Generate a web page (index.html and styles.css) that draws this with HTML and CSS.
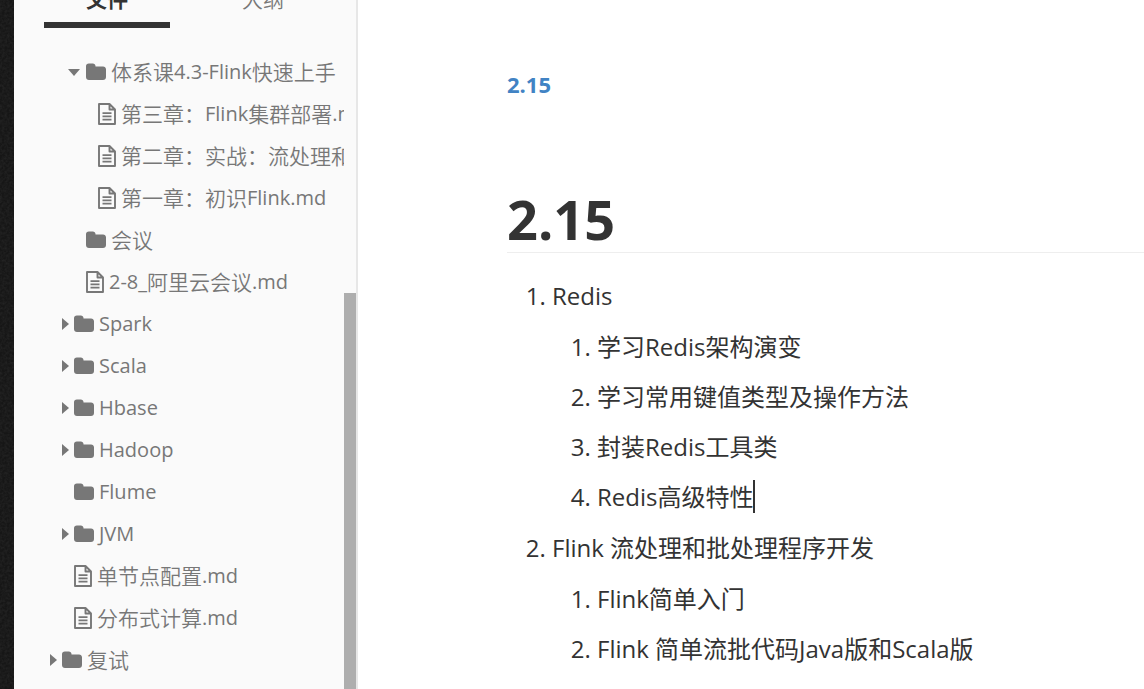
FILE: index.html
```
<!DOCTYPE html>
<html lang="zh-CN">
<head>
<meta charset="utf-8">
<title>2.15</title>
<link rel="stylesheet" href="styles.css">
</head>
<body>
<svg class="defs" aria-hidden="true">
  <symbol id="folder" viewBox="0 0 20 18"><path d="M0 3.2C0 1.6 1.2.5 2.8.5h4C8.3.5 9.500 1.600 9.500 3.100v.4H17c1.700 0 3 1.200 3 2.800V14c0 1.700-1.200 3-3 3H3c-1.700 0-3-1.200-3-3z"/></symbol>
  <symbol id="file" viewBox="0 0 18 22"><path fill="none" stroke="currentColor" stroke-width="1.900" stroke-linejoin="round" d="M1 1h10.500L17 6.500V21H1zM11.500 1v5.500H17"/><path d="M4.500 9.300h9V11h-9zM4.500 12.500h9v1.700h-9zM4.500 15.700h9v1.700h-9z"/></symbol>
  <symbol id="right" viewBox="0 0 7 12"><path d="M0 0l7 6-7 6z"/></symbol>
  <symbol id="down" viewBox="0 0 12 7"><path d="M0 0h12L6 7z"/></symbol>
</svg>
<div class="app">
  <svg class="edge" aria-hidden="true">
    <filter id="grain"><feTurbulence type="fractalNoise" baseFrequency="0.4" numOctaves="2"/><feColorMatrix values="0 0 0 0 1  0 0 0 0 1  0 0 0 0 1  .1 0 0 0 -.03"/></filter>
    <rect width="100%" height="100%" filter="url(#grain)"/>
  </svg>
  <aside class="sidebar">
    <div class="tabs">
      <button class="tab active">文件</button>
      <button class="tab">大纲</button>
    </div>
    <ul class="tree">
      <li class="l2"><button class="row"><span class="arrow"><svg class="down"><use href="#down"/></svg></span><svg class="folder"><use href="#folder"/></svg>体系课<span class="en">4.3-Flink</span>快速上手</button></li>
      <li class="l3"><a class="row" href="#"><span class="arrow"></span><svg class="file"><use href="#file"/></svg>第三章：<span class="en">Flink</span>集群部署<span class="en">.md</span></a></li>
      <li class="l3"><a class="row" href="#"><span class="arrow"></span><svg class="file"><use href="#file"/></svg>第二章：实战：流处理和批处理<span class="en">.md</span></a></li>
      <li class="l3"><a class="row" href="#"><span class="arrow"></span><svg class="file"><use href="#file"/></svg>第一章：初识<span class="en">Flink.md</span></a></li>
      <li class="l2"><button class="row"><span class="arrow"></span><svg class="folder"><use href="#folder"/></svg>会议</button></li>
      <li class="l2"><a class="row" href="#"><span class="arrow"></span><svg class="file"><use href="#file"/></svg><span class="en">2-8_</span>阿里云会议<span class="en">.md</span></a></li>
      <li class="l1"><button class="row"><span class="arrow"><svg class="right"><use href="#right"/></svg></span><svg class="folder"><use href="#folder"/></svg><span class="en">Spark</span></button></li>
      <li class="l1"><button class="row"><span class="arrow"><svg class="right"><use href="#right"/></svg></span><svg class="folder"><use href="#folder"/></svg><span class="en">Scala</span></button></li>
      <li class="l1"><button class="row"><span class="arrow"><svg class="right"><use href="#right"/></svg></span><svg class="folder"><use href="#folder"/></svg><span class="en">Hbase</span></button></li>
      <li class="l1"><button class="row"><span class="arrow"><svg class="right"><use href="#right"/></svg></span><svg class="folder"><use href="#folder"/></svg><span class="en">Hadoop</span></button></li>
      <li class="l1"><button class="row"><span class="arrow"></span><svg class="folder"><use href="#folder"/></svg><span class="en">Flume</span></button></li>
      <li class="l1"><button class="row"><span class="arrow"><svg class="right"><use href="#right"/></svg></span><svg class="folder"><use href="#folder"/></svg><span class="en">JVM</span></button></li>
      <li class="l1"><a class="row" href="#"><span class="arrow"></span><svg class="file"><use href="#file"/></svg>单节点配置<span class="en">.md</span></a></li>
      <li class="l1"><a class="row" href="#"><span class="arrow"></span><svg class="file"><use href="#file"/></svg>分布式计算<span class="en">.md</span></a></li>
      <li class="l0"><button class="row"><span class="arrow"><svg class="right"><use href="#right"/></svg></span><svg class="folder"><use href="#folder"/></svg>复试</button></li>
    </ul>
    <div class="thumb"></div>
  </aside>
  <main class="doc">
    <nav class="toc"><a href="#top">2.15</a></nav>
    <h1 id="top">2.15</h1>
    <ol>
      <li>Redis
        <ol>
          <li>学习Redis架构演变</li>
          <li>学习常用键值类型及操作方法</li>
          <li>封装Redis工具类</li>
          <li>Redis高级特性<span class="caret"></span></li>
        </ol>
      </li>
      <li>Flink 流处理和批处理程序开发
        <ol>
          <li>Flink简单入门</li>
          <li>Flink 简单流批代码Java版和Scala版</li>
        </ol>
      </li>
    </ol>
  </main>
</div>
</body>
</html>
```
FILE: styles.css
```
* { box-sizing: border-box; }
body {
  margin: 0;
  background: #fff;
  color: #333;
  font-family: "Open Sans", "Noto Sans CJK SC", sans-serif;
}
.defs { position: absolute; width: 0; height: 0; }
.app { display: flex; height: 100vh; overflow: hidden; }
.edge { flex: none; width: 14px; height: 100%; background: #161616; }
.sidebar {
  position: relative;
  flex: none;
  width: 344px;
  background: #fafafa;
  border-right: 2px solid #e7e7e7;
  color: #777;
}
.tabs {
  display: flex;
  align-items: flex-end;
  gap: 30px;
  height: 28px;
  padding: 0 30px;
  overflow: hidden;
}
button { border: 0; background: none; color: inherit; font: inherit; }
.tab {
  flex: 1;
  padding: 0 0 9px;
  border-bottom: 6px solid transparent;
  font-size: 21px;
  font-weight: 350;
  line-height: 28px;
}
.tab.active { border-color: #333; color: #333; font-weight: 700; }
.tree {
  margin: 23px 12px 0 0;
  padding: 0 0 0 30px;
  overflow: hidden;
  list-style: none;
}
.l1 { padding-left: 12px; }
.l2 { padding-left: 24px; }
.l3 { padding-left: 36px; }
.row {
  display: flex;
  align-items: center;
  height: 42px;
  padding: 0;
  color: #777;
  font-size: 21px;
  font-weight: 350;
  line-height: 42px;
  text-decoration: none;
  white-space: nowrap;
}
.en { font-size: 20px; font-weight: 400; }
.row svg { flex: none; fill: currentColor; }
.arrow {
  display: flex;
  flex: none;
  justify-content: flex-end;
  width: 18px;
  padding-right: 5px;
}
.right { width: 7px; height: 12px; }
.down { width: 12px; height: 7px; margin-right: 1px; }
.folder { width: 20px; height: 18px; margin-right: 5px; }
.file { width: 18px; height: 22px; margin-right: 5px; }
.thumb {
  position: absolute;
  top: 293px;
  right: 0;
  bottom: 0;
  width: 12px;
  background: #aeaeae;
}
.doc {
  flex: 1;
  min-width: 0;
  padding: 65px 0 0 149px;
  font-size: 24px;
  line-height: 38px;
}
.toc { font-size: 22px; font-weight: 700; }
.toc a { color: #4183c4; text-decoration: none; }
h1 {
  margin: 84px 0 24px;
  border-bottom: 1px solid #eee;
  font-size: 54px;
  font-weight: 700;
  line-height: 65px;
}
ol { margin: 0; padding-left: 45px; }
li li + li { margin-top: 12px; }
.doc li ol, .doc > ol > li + li { margin-top: 13px; }
.caret {
  display: inline-block;
  width: 2px;
  height: 33px;
  background: #333;
  vertical-align: text-bottom;
}
```
